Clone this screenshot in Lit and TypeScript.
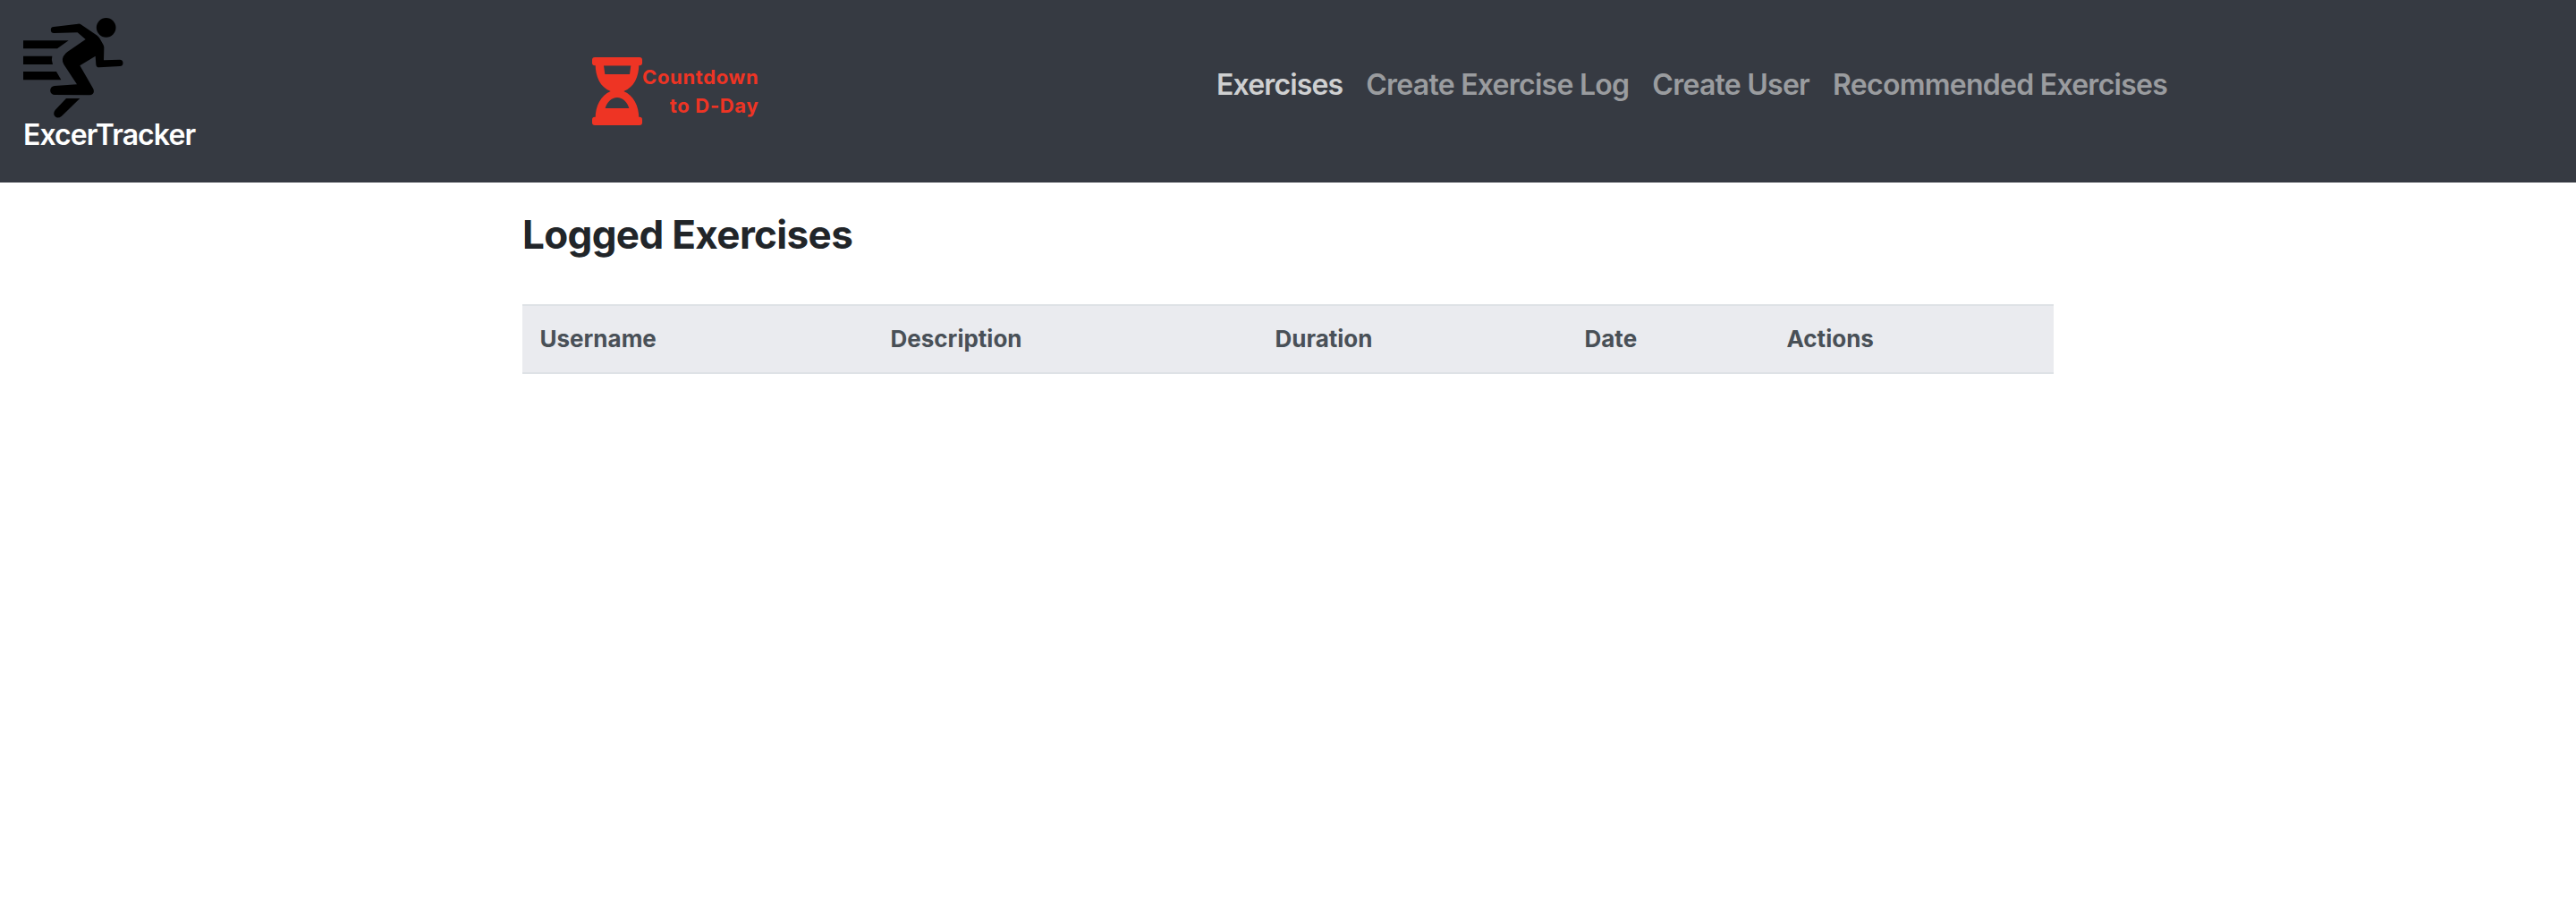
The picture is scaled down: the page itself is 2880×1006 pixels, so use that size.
import { LitElement, html, css } from "lit";
import { customElement, state } from "lit/decorators.js";

@customElement("runner-icon")
export class RunnerIcon extends LitElement {
  static styles = css`
    :host { display: block; }
    .icon { display: block; width: 112px; height: 114px; }
  `;
  render() {
    return html`
      <svg class="icon" viewBox="18 30 336 342" fill="#000">
        <circle cx="296" cy="62.500" r="32.500" />
        <path d="M120 60 L202 50 Q207 49 211 52 L266 89 Q271 93 274 98 L286 119 Q289 124 289 130 L288 172 L341 170 A11 11 0 0 1 342 192 L273 196 Q263 197 262 186 L260 158 L208 190 L252 266 Q258 277 251 285 Q247 289 240 289 L124 288 A15 15 0 0 1 123 258 L198 253 L154 186 Q143 166 160 149 Q163 146 167 143 L227 102 L200 79 L122 81 A10.500 10.500 0 0 1 120 60 Z" />
        <path d="M18 106 H170 L132 133 H18 Z" />
        <path d="M18 158 H115 Q111 172 117 186 H18 Z" />
        <path d="M18 210 H129 L145 238 H18 Z" />
        <path d="M162 300 H208 L147 359 Q134 369 125 361 Q116 352 125 339 Z" />
      </svg>
    `;
  }
}

@customElement("hourglass-icon")
export class HourglassIcon extends LitElement {
  static styles = css`
    :host { display: block; }
    .icon { display: block; width: 56px; height: 76px; }
  `;
  render() {
    return html`
      <svg class="icon" viewBox="21 27 168 228" fill="#ee3424">
        <rect x="21" y="27" width="168" height="28" rx="9" />
        <rect x="21" y="227" width="168" height="28" rx="9" />
        <path fill-rule="evenodd" d="M32 50 H178 C178 92 162 127 127 141 C160 155 178 190 178 232 H32 C32 190 50 155 83 141 C48 127 32 92 32 50 Z M60 55 L64 84 H147 L151 55 Z M65 198 H145 C139 177 124 162 105 162 C86 162 71 177 65 198 Z" />
      </svg>
    `;
  }
}

@customElement("app-root")
export class AppRoot extends LitElement {
  static styles = css`
    :host {
      display: block;
      min-height: 1006px;
      background: #fff;
      color: #212529;
      font-family: Inter, "Liberation Sans", sans-serif;
    }
    .navbar {
      display: flex;
      align-items: flex-start;
      box-sizing: border-box;
      height: 204px;
      padding: 20px 26px;
      background: #363a42;
    }
    .brand {
      flex: 0 0 636px;
      color: #fff;
      font-size: 32px;
      font-weight: 600;
      line-height: 40px;
      letter-spacing: -0.92px;
      text-decoration: none;
    }
    .brand-name { display: block; margin-top: -3px; }
    .countdown {
      display: flex;
      flex: 0 0 698px;
      padding-top: 44px;
      color: #ee3424;
      text-decoration: none;
    }
    .countdown-text {
      padding-top: 6px;
      font-size: 22px;
      font-weight: 700;
      line-height: 32px;
      letter-spacing: 0.65px;
      text-align: right;
    }
    .links {
      display: flex;
      gap: 26px;
      margin: 0;
      padding: 55px 0 0;
      list-style: none;
    }
    .link {
      color: #9a9c9f;
      font-size: 32px;
      font-weight: 600;
      line-height: 40px;
      letter-spacing: -0.74px;
      text-decoration: none;
      white-space: nowrap;
    }
    .link.active { color: #cfd0d1; letter-spacing: -0.86px; }
    .content { width: 1712px; margin: 0 auto; padding-top: 31px; }
    .title {
      margin: 0 0 51px;
      font-size: 44px;
      font-weight: 700;
      line-height: 54px;
      letter-spacing: -0.65px;
    }
    .table {
      display: grid;
      grid-template-columns: 392px 430px 346px 226px 1fr;
      border-top: 2px solid #dee2e6;
      border-bottom: 2px solid #dee2e6;
      background: #eaebef;
      color: #495057;
      font-size: 26px;
      font-weight: 700;
      line-height: 40px;
    }
    .cell { padding: 17px 19.5px; }
  `;

  @state() private active = "Exercises";

  private links = ["Exercises", "Create Exercise Log", "Create User", "Recommended Exercises"];
  private columns = ["Username", "Description", "Duration", "Date", "Actions"];

  render() {
    return html`
      <nav class="navbar">
        <a class="brand"><runner-icon></runner-icon><span class="brand-name">ExcerTracker</span></a>
        <a class="countdown">
          <hourglass-icon></hourglass-icon>
          <div class="countdown-text">Countdown<br />to D-Day</div>
        </a>
        <ul class="links">
          ${this.links.map((label) => html`<li><a class="link ${label === this.active ? "active" : ""}" @click=${() => (this.active = label)}>${label}</a></li>`)}
        </ul>
      </nav>
      <main class="content">
        <h3 class="title">Logged Exercises</h3>
        <div class="table" role="table">
          ${this.columns.map((name) => html`<div class="cell" role="columnheader">${name}</div>`)}
        </div>
      </main>
    `;
  }
}
